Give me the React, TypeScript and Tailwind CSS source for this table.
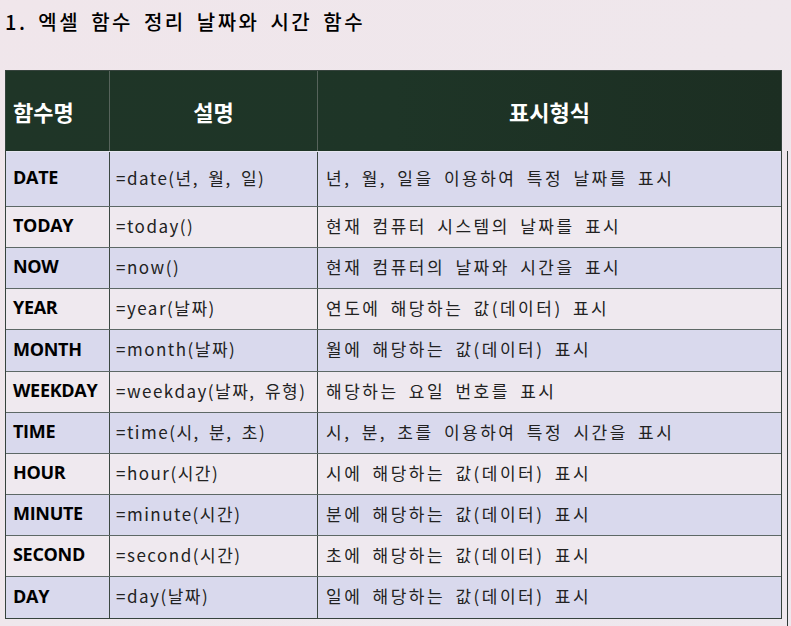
import React from "react";

const rows: { name: string; fn: string; desc: string; h: string; alt: boolean }[] = [
  { name: "DATE", fn: "=date(년, 월, 일)", desc: "년, 월, 일을 이용하여 특정 날짜를 표시", h: "h-[55px]", alt: true },
  { name: "TODAY", fn: "=today()", desc: "현재 컴퓨터 시스템의 날짜를 표시", h: "h-[41px]", alt: false },
  { name: "NOW", fn: "=now()", desc: "현재 컴퓨터의 날짜와 시간을 표시", h: "h-[41px]", alt: true },
  { name: "YEAR", fn: "=year(날짜)", desc: "연도에 해당하는 값(데이터) 표시", h: "h-[41px]", alt: false },
  { name: "MONTH", fn: "=month(날짜)", desc: "월에 해당하는 값(데이터) 표시", h: "h-[42px]", alt: true },
  { name: "WEEKDAY", fn: "=weekday(날짜, 유형)", desc: "해당하는 요일 번호를 표시", h: "h-[41px]", alt: false },
  { name: "TIME", fn: "=time(시, 분, 초)", desc: "시, 분, 초를 이용하여 특정 시간을 표시", h: "h-[41px]", alt: true },
  { name: "HOUR", fn: "=hour(시간)", desc: "시에 해당하는 값(데이터) 표시", h: "h-[41px]", alt: false },
  { name: "MINUTE", fn: "=minute(시간)", desc: "분에 해당하는 값(데이터) 표시", h: "h-[41px]", alt: true },
  { name: "SECOND", fn: "=second(시간)", desc: "초에 해당하는 값(데이터) 표시", h: "h-[41px]", alt: false },
  { name: "DAY", fn: "=day(날짜)", desc: "일에 해당하는 값(데이터) 표시", h: "h-[41px]", alt: true },
];

const kr = "font-['Noto_Sans_CJK_KR',sans-serif]";

export default function App() {
  return (
    <div className="relative w-[791px] h-[626px] overflow-hidden bg-gradient-to-br from-[#f0e6eb] via-[#efe7ec] to-[#eee8ee]">
      <div className="absolute left-[787px] top-[151px] w-px h-[475px] bg-[#2f3a36]" />
      <div
        className={`pt-[8px] pl-[5px] text-[20px] leading-[28px] font-medium text-black tracking-[2.5px] [word-spacing:4px] ${kr}`}
      >
        1. 엑셀 함수 정리 날짜와 시간 함수
      </div>
      <div className="mt-[34px] ml-[5px] w-[777px] border border-[#36433d] flex flex-col">
        <div className="h-[81px] grid grid-cols-[104px_208px_463px] bg-gradient-to-r from-[#1f3527] via-[#1e3527] to-[#1c2e22] border-b border-[#e6e6f0] text-white text-[22px] font-bold">
          <div className={`flex items-center pl-[7px] border-r border-[#56635b] ${kr}`}>함수명</div>
          <div className={`flex items-center justify-center border-r border-[#56635b] ${kr}`}>설명</div>
          <div className={`flex items-center justify-center ${kr}`}>표시형식</div>
        </div>
        {rows.map((r, i) => (
          <div
            key={r.name}
            className={`${r.h} grid grid-cols-[104px_208px_463px] ${
              i < rows.length - 1 ? "border-b border-[#5d6866]" : ""
            } ${r.alt ? "bg-[#d9d9ed]" : "bg-[#efe9ef]"}`}
          >
            <div className="flex items-center pl-[7px] pb-[3px] border-r border-[#3b4742] font-['Open_Sans',sans-serif] font-bold text-[18px] tracking-[-0.3px] text-black">
              {r.name}
            </div>
            <div
              className={`flex items-center pl-[6px] pb-[3px] border-r border-[#3b4742] text-[17px] text-[#222] tracking-[1.5px] [word-spacing:4px] whitespace-nowrap ${kr}`}
            >
              {r.fn}
            </div>
            <div
              className={`flex items-center pl-[8px] pb-[3px] text-[17px] text-[#222] tracking-[2.5px] [word-spacing:4px] whitespace-nowrap ${kr}`}
            >
              {r.desc}
            </div>
          </div>
        ))}
      </div>
    </div>
  );
}
